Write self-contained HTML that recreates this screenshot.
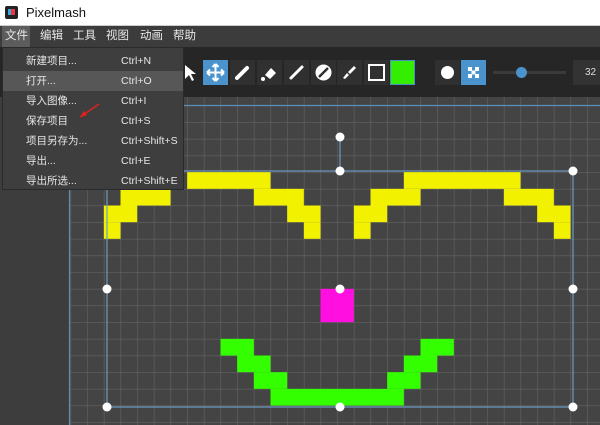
<!DOCTYPE html>
<html><head><meta charset="utf-8"><style>
*{margin:0;padding:0;box-sizing:border-box}
body{width:600px;height:425px;overflow:hidden;background:#3d3d3d;font-family:"Liberation Sans","Noto Sans CJK SC",sans-serif;position:relative}
.t{position:absolute;left:0;top:0;width:600px;height:26px;background:#fff;border-bottom:1px solid #ccc}
.t span{position:absolute;left:26px;top:5px;font-size:13px;color:#111}
.mb{position:absolute;left:0;top:26px;width:600px;height:21px;background:#3c3c3c;font-size:11.5px;color:#e8e8e8}
.mb span{position:absolute;top:3px;line-height:15px}
.tb{position:absolute;left:0;top:47px;width:600px;height:50px;background:#262626}
.b{position:absolute;top:13px;width:25px;height:25px;background:#303030}
.menu{position:absolute;left:2px;top:47px;width:182px;height:143px;background:#3e3e3e;border:1px solid #2a2a2a;font-size:10.5px;color:#e6e6e6}
.r{position:absolute;left:0;width:180px;height:20px}
.r span{position:absolute;top:3px;line-height:14px}
</style></head><body>
<div class="t"><svg style="position:absolute;left:5px;top:6px" width="13" height="13"><rect width="13" height="13" rx="2" fill="#222"/><rect x="3" y="3" width="4" height="6" fill="#3ad"/><rect x="6" y="3" width="4" height="6" fill="#e34"/></svg><span>Pixelmash</span></div>
<div class="mb"><div style="position:absolute;left:2px;top:0;width:28px;height:21px;background:#5c5c5c"></div>
<span style="left:5px">文件</span><span style="left:40px">编辑</span><span style="left:73px">工具</span><span style="left:106px">视图</span><span style="left:140px">动画</span><span style="left:173px">帮助</span></div>
<div class="tb">
<svg style="position:absolute;left:183px;top:17px" width="14" height="18"><path d="M2 1 L2 15 L6 11 L9 17 L11 16 L8 10 L13 10 Z" fill="#fff"/></svg>
<div class="b" style="left:203px;background:#4a93cc"><svg width="25" height="25"><path d="M12.5 4v17M4 12.5h17M12.5 4l-3 3M12.5 4l3 3M12.5 21l-3-3M12.5 21l3-3M4 12.5l3-3M4 12.5l3 3M21 12.5l-3-3M21 12.5l-3 3" stroke="#fff" stroke-width="2" fill="none"/></svg></div>
<div class="b" style="left:230px"><svg width="25" height="25"><path d="M7 18l10-10" stroke="#fff" stroke-width="4" stroke-linecap="round"/></svg></div>
<div class="b" style="left:257px"><svg width="25" height="25"><path d="M8 15l6-7 5 5-6 6z" fill="#fff"/><circle cx="6" cy="19" r="2" fill="#fff"/></svg></div>
<div class="b" style="left:284px"><svg width="25" height="25"><path d="M7 18l11-11" stroke="#fff" stroke-width="3" stroke-linecap="round"/></svg></div>
<div class="b" style="left:311px"><svg width="25" height="25"><circle cx="12.5" cy="12.5" r="8" fill="#fff"/><path d="M8 17l9-9" stroke="#303030" stroke-width="2.5"/></svg></div>
<div class="b" style="left:337px"><svg width="25" height="25"><path d="M17 6l2 2-6 6-2-2z M10 13l2 2-4 4-2-1z" fill="#fff"/></svg></div>
<div class="b" style="left:364px"><svg width="25" height="25"><rect x="5" y="5" width="15" height="15" fill="none" stroke="#fff" stroke-width="2"/></svg></div>
<div class="b" style="left:390px;background:#33ee00;border:1px solid #4a90c8"></div>
<div class="b" style="left:435px;width:25px"><svg width="25" height="25"><circle cx="12.5" cy="12.5" r="6.5" fill="#fff"/></svg></div>
<div class="b" style="left:461px;background:#4a93cc"><svg width="25" height="25"><path d="M7 7h4v4H7zM14 7h4v4h-4zM7 14h4v4H7zM14 14h4v4h-4zM10.5 10.5h4v4h-4z" fill="#fff"/></svg></div>
<div style="position:absolute;left:493px;top:24px;width:73px;height:3px;background:#3a3a3a"></div>
<div style="position:absolute;left:516px;top:20px;width:11px;height:11px;border-radius:50%;background:#4a93cc"></div>
<div style="position:absolute;left:573px;top:13px;width:30px;height:25px;background:#333;color:#ddd;font-size:10px;padding:7px 0 0 12px">32</div>
</div>
<svg style="position:absolute;left:0;top:97px" width="600" height="328">
<defs><pattern id="g" x="70.5" y="8.5" width="16.667" height="16.667" patternUnits="userSpaceOnUse"><rect width="16.667" height="16.667" fill="#444"/><path d="M0 0H16.667M0 0V16.667" stroke="#646464" stroke-width="1.2"/></pattern></defs>
<rect x="69" y="0" width="531" height="328" fill="url(#g)"/>
<g transform="translate(70.5,8.5) scale(16.667)">
<g fill="#f2f200">
<rect x="7" y="4" width="5" height="1"/><rect x="3" y="5" width="3" height="1"/><rect x="11" y="5" width="3" height="1"/><rect x="2" y="6" width="2" height="1"/><rect x="13" y="6" width="2" height="1"/><rect x="2" y="7" width="1" height="1"/><rect x="14" y="7" width="1" height="1"/>
<rect x="20" y="4" width="7" height="1"/><rect x="18" y="5" width="3" height="1"/><rect x="26" y="5" width="3" height="1"/><rect x="17" y="6" width="2" height="1"/><rect x="28" y="6" width="2" height="1"/><rect x="17" y="7" width="1" height="1"/><rect x="29" y="7" width="1" height="1"/>
</g>
<rect x="15" y="11" width="2" height="2" fill="#ff10e0"/>
<g fill="#33ff00">
<rect x="9" y="14" width="2" height="1"/><rect x="21" y="14" width="2" height="1"/><rect x="10" y="15" width="2" height="1"/><rect x="20" y="15" width="2" height="1"/><rect x="11" y="16" width="2" height="1"/><rect x="19" y="16" width="2" height="1"/><rect x="12" y="17" width="8" height="1"/>
</g></g>
<path d="M69.5 0V328M69 8.5H600" stroke="#5b8fb8" stroke-width="1.2"/>
<rect x="107" y="74" width="466" height="236" fill="none" stroke="#6c9cc4" stroke-width="1.2"/>
<path d="M340 40V74" stroke="#6c9cc4" stroke-width="1.2"/>
<g fill="#fff"><circle cx="340" cy="40" r="4.5"/><circle cx="340" cy="74" r="4.5"/><circle cx="573" cy="74" r="4.5"/><circle cx="107" cy="192" r="4.5"/><circle cx="573" cy="192" r="4.5"/><circle cx="340" cy="192" r="4.5"/><circle cx="107" cy="310" r="4.5"/><circle cx="340" cy="310" r="4.5"/><circle cx="573" cy="310" r="4.5"/></g>
</svg>
<div class="menu">
<div class="r" style="top:3px"><span style="left:23px">新建项目...</span><span style="left:118px">Ctrl+N</span></div>
<div class="r" style="top:23px;background:#575757"><span style="left:23px">打开...</span><span style="left:118px">Ctrl+O</span></div>
<div class="r" style="top:43px"><span style="left:23px">导入图像...</span><span style="left:118px">Ctrl+I</span></div>
<div class="r" style="top:63px"><span style="left:23px">保存项目</span><span style="left:118px">Ctrl+S</span></div>
<div class="r" style="top:83px"><span style="left:23px">项目另存为...</span><span style="left:118px">Ctrl+Shift+S</span></div>
<div class="r" style="top:103px"><span style="left:23px">导出...</span><span style="left:118px">Ctrl+E</span></div>
<div class="r" style="top:123px"><span style="left:23px">导出所选...</span><span style="left:118px">Ctrl+Shift+E</span></div>
</div>
<svg style="position:absolute;left:75px;top:100px" width="30" height="22"><path d="M24 4L8 15" stroke="#e02020" stroke-width="1.5"/><path d="M4 18L9 11L12 15Z" fill="#e02020"/></svg>
</body></html>
